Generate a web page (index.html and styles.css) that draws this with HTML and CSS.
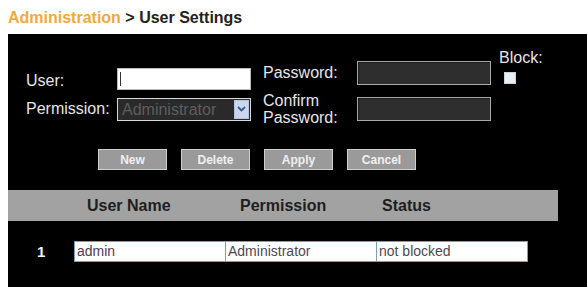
FILE: index.html
```html
<!DOCTYPE html>
<html lang="en">
<head>
    <meta charset="UTF-8">
    <meta name="viewport" content="width=device-width, initial-scale=1.0">
    <title>User Settings</title>
    <link rel="stylesheet" href="styles.css">
</head>
<body>
<h1 class="crumb"><span class="crumb-root">Administration</span> &gt; User Settings</h1>

<div class="panel">
    <div class="form-grid">
        <label class="lbl lbl-user" for="user">User:</label>
        <div class="field-user">
            <input type="text" id="user">
            <span class="caret"></span>
        </div>

        <label class="lbl lbl-pass" for="pass">Password:</label>
        <input type="password" id="pass" class="field-dark field-pass">

        <div class="block">
            <label for="block">Block:</label>
            <input type="checkbox" id="block" class="chk">
        </div>

        <label class="lbl" for="perm">Permission:</label>
        <div class="select" id="perm">
            <span class="select-text">Administrator</span>
            <span class="select-arrow">
                <svg width="9" height="6" viewBox="0 0 9 6"><path d="M1 1 L4.5 4.5 L8 1" fill="none" stroke="#3d5a8a" stroke-width="1.8"/></svg>
            </span>
        </div>

        <label class="lbl lbl-confirm" for="confirm">Confirm<br>Password:</label>
        <input type="password" id="confirm" class="field-dark">
    </div>

    <div class="actions">
        <button class="btn">New</button>
        <button class="btn">Delete</button>
        <button class="btn">Apply</button>
        <button class="btn">Cancel</button>
    </div>

    <div class="list-head">
        <span>User Name</span>
        <span>Permission</span>
        <span>Status</span>
    </div>

    <div class="list-row">
        <span class="num">1</span>
        <div class="cells">
            <span class="cell cell-name">admin</span>
            <span class="cell">Administrator</span>
            <span class="cell">not blocked</span>
        </div>
    </div>
</div>
</body>
</html>
```

FILE: styles.css
```css
body {
    font-family: "Liberation Sans", Arial, sans-serif;
    background-color: #fff;
    margin: 0;
    padding: 0;
    height: 100vh;
    display: flex;
    flex-direction: column;
    overflow: hidden;
}
.crumb {
    font-size: 16px;
    line-height: 18px;
    font-weight: bold;
    color: #222;
    margin: 0;
    padding: 9px 0 0 8px;
    height: 25px;
}
.crumb-root {
    color: #f2a93b;
}
.panel {
    flex: 1;
    margin-left: 8px;
    background-color: #000;
    padding-top: 15px;
}
.form-grid {
    display: grid;
    grid-template-columns: 91px 134px 106px 134px auto;
    grid-template-rows: 41px 34px;
    row-gap: 2px;
    padding-left: 18px;
}
.lbl {
    color: #e6e6e6;
    font-size: 16px;
    line-height: 18px;
    align-self: center;
}
.lbl-user {
    align-self: end;
}
.lbl-pass {
    align-self: end;
    line-height: 24px;
    margin-bottom: 5px;
    padding-left: 12px;
}
.lbl-confirm {
    line-height: 17px;
    padding-left: 12px;
}
.field-user {
    position: relative;
    align-self: end;
    height: 22px;
}
.field-user input {
    box-sizing: border-box;
    width: 134px;
    height: 22px;
    margin: 0;
    border: 1px solid #b8b8b8;
    background: #fff;
    outline: none;
}
.caret {
    position: absolute;
    left: 3px;
    top: 4px;
    width: 1px;
    height: 14px;
    background: #333;
}
.field-dark {
    box-sizing: border-box;
    width: 134px;
    height: 24px;
    margin: 0;
    background: #2e2e2e;
    border: 1px solid #a8a8a8;
    box-shadow: inset 1px 1px 0 #1a1a1a;
    align-self: center;
    outline: none;
}
.field-pass {
    align-self: end;
    margin-bottom: 5px;
}
.block {
    grid-row: 1;
    grid-column: 5;
    align-self: start;
    padding-left: 8px;
    color: #e6e6e6;
    font-size: 16px;
    line-height: 18px;
}
.block label {
    display: block;
}
.chk {
    appearance: none;
    display: block;
    width: 12px;
    height: 12px;
    margin: 5px 0 0 5px;
    background: #e9eef5;
    border: 1px solid #c9d1dc;
    box-sizing: border-box;
}
.select {
    box-sizing: border-box;
    width: 134px;
    height: 23px;
    align-self: center;
    display: flex;
    align-items: center;
    background: #2a2a2a;
    border: 1px solid #d8d8d8;
}
.select-text {
    flex: 1;
    color: #5e5e5e;
    font-size: 16px;
    padding-left: 4px;
    line-height: 21px;
}
.select-arrow {
    width: 15px;
    height: 19px;
    margin-right: 1px;
    background: #c9d7ee;
    border: 1px solid #b3c4e0;
    box-sizing: border-box;
    display: flex;
    align-items: center;
    justify-content: center;
}
.actions {
    display: flex;
    gap: 14px;
    margin-top: 23px;
    padding-left: 90px;
}
.btn {
    box-sizing: border-box;
    width: 69px;
    height: 21px;
    padding: 0;
    background-color: #9a9a9a;
    border: 1px solid #cfcfcf;
    color: #f0f0f0;
    font-family: "Liberation Sans", Arial, sans-serif;
    font-size: 12px;
    font-weight: bold;
    cursor: pointer;
}
.btn:hover {
    background-color: #a6a6a6;
}
.list-head {
    display: grid;
    grid-template-columns: 153px 142px auto;
    align-items: center;
    width: 550px;
    height: 31px;
    box-sizing: border-box;
    margin-top: 20px;
    padding-left: 79px;
    background-color: #a2a2a2;
    color: #1e1e1e;
    font-size: 16px;
    font-weight: bold;
}
.list-row {
    display: flex;
    align-items: center;
    margin-top: 20px;
    height: 21px;
}
.num {
    width: 37px;
    padding-left: 29px;
    color: #f4f4f4;
    font-size: 15px;
    font-weight: bold;
}
.cells {
    display: flex;
    border: 1px solid #7f9db9;
    background: #fff;
}
.cell {
    box-sizing: border-box;
    width: 151px;
    height: 19px;
    line-height: 19px;
    padding-left: 2px;
    color: #4d4a52;
    font-size: 14px;
    border-left: 1px solid #7f9db9;
}
.cell-name {
    width: 150px;
    border-left: none;
    color: #54384e;
}
```
